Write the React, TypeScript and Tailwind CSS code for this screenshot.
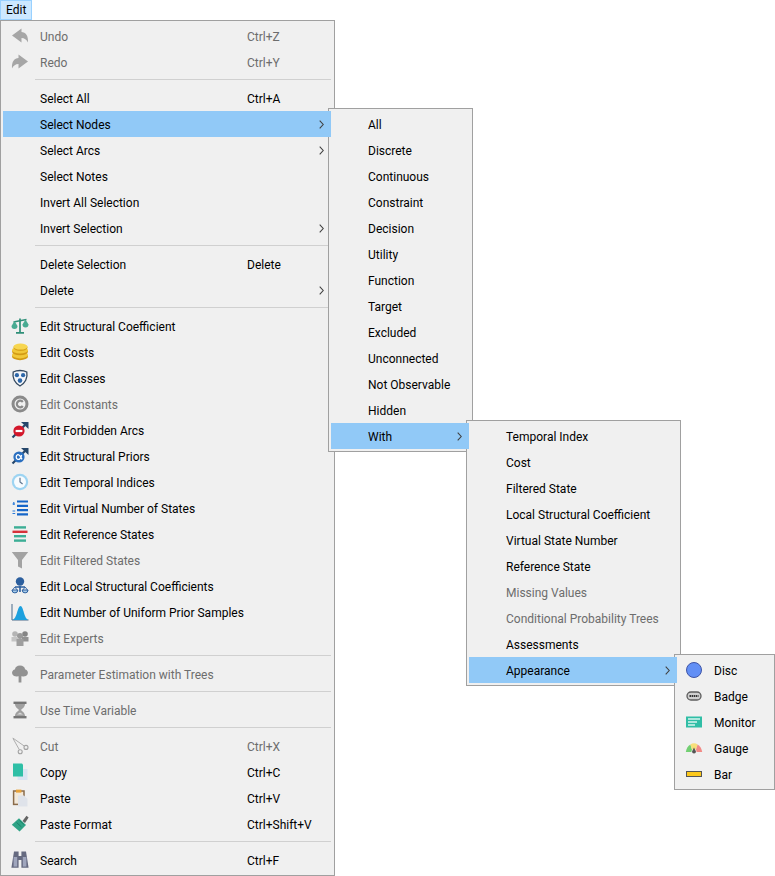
import React from "react";

type Ic = React.ReactNode;
const S = ({ children }: { children: Ic }) => (
  <svg width="18" height="18" viewBox="0 0 18 18" className="block">{children}</svg>
);

const arrowPath = "M1 8.5 L10.5 1.5 V5 C14.5 5 17.5 8.5 17 15.5 C15.5 12.5 13.5 11 10.5 11 V15.5 Z";
const Undo = (
  <S><path d={arrowPath} fill="#a6a6a6" /></S>
);
const Redo = (
  <S><g transform="translate(18,0) scale(-1,1)"><path d={arrowPath} fill="#a6a6a6" /></g></S>
);
const Scales = (
  <S>
    <path d="M9 1.5 V15 M5 15.8 H13" stroke="#2f8f78" strokeWidth="1.7" fill="none" />
    <path d="M2.5 5 L15.5 2.5" stroke="#2f8f78" strokeWidth="1.3" />
    <path d="M0.5 9 A3 3 0 0 0 6.5 9 L3.5 4 Z" fill="#48ab92" />
    <path d="M11.5 7.5 A3 3 0 0 0 17.5 7.5 L14.5 2.5 Z" fill="#48ab92" />
  </S>
);
const Coins = (
  <S>
    <ellipse cx="9" cy="13.4" rx="8" ry="3.8" fill="#d29a14" />
    <ellipse cx="9" cy="11.8" rx="8" ry="3.6" fill="#f1c838" />
    <ellipse cx="9" cy="8.6" rx="8" ry="3.6" fill="#d29a14" />
    <ellipse cx="9" cy="7.2" rx="8" ry="3.4" fill="#f1c838" />
    <ellipse cx="9.5" cy="4.6" rx="7" ry="3.4" fill="#d8a41a" />
    <ellipse cx="9.5" cy="3.6" rx="7" ry="3" fill="#f7d650" />
  </S>
);
const Classes = (
  <S>
    <path d="M2.2 3 C6 1 12 1 15.8 3 C17 9 14 14.5 9 17 C4 14.5 1 9 2.2 3 Z" fill="#f4f6fa" stroke="#34495f" strokeWidth="1.3" />
    <circle cx="5.9" cy="6.2" r="2.1" fill="#2c66a8" />
    <circle cx="12.1" cy="6.2" r="2.1" fill="#2c66a8" />
    <circle cx="9" cy="11.6" r="2.3" fill="#2c66a8" />
  </S>
);
const Constants = (
  <S>
    <circle cx="9" cy="9" r="7" fill="none" stroke="#8a8a8a" strokeWidth="3" />
    <path d="M11.8 7 A3.3 3.3 0 1 0 11.8 11" fill="none" stroke="#8a8a8a" strokeWidth="2.2" />
  </S>
);
const Forbidden = (
  <S>
    <path d="M1.5 16.5 L14 4" stroke="#25466a" strokeWidth="2.2" />
    <path d="M10 1 H17.5 V8 Z" fill="#25466a" />
    <circle cx="8" cy="10" r="5.6" fill="#d3172b" />
    <rect x="4.6" y="8.9" width="6.8" height="2.2" fill="#fff" />
  </S>
);
const Priors = (
  <S>
    <path d="M1.5 16.5 L14 4" stroke="#25466a" strokeWidth="2.2" />
    <path d="M10 1 H17.5 V8 Z" fill="#25466a" />
    <circle cx="8" cy="10" r="5.6" fill="#2a6fc0" />
    <path d="M10.6 8 C9.6 13 7.6 12.6 6.4 12.2 C4.8 11.6 4.8 8.4 6.4 7.8 C8 7.2 9.6 9.6 11 12.4" fill="none" stroke="#fff" strokeWidth="1.3" />
  </S>
);
const Clock = (
  <S>
    <circle cx="9" cy="9" r="8.2" fill="#9dd4f2" />
    <circle cx="9" cy="9" r="6" fill="#f7fbfe" />
    <path d="M9 4.8 V9 L11.6 11" fill="none" stroke="#5f7690" strokeWidth="1.2" />
  </S>
);
const VirtualList = (
  <S>
    <path d="M6 2.5 H17 M6 6.8 H17 M6 11.1 H17 M6 15.4 H17" stroke="#1565c8" strokeWidth="2.2" />
    <path d="M1.5 5 H4 M2.8 3 V6 M1.5 12 H4.2 M1.5 14.5 H4.2" stroke="#2b7bd8" strokeWidth="1.2" />
  </S>
);
const Reference = (
  <S>
    <rect x="3" y="1.2" width="12" height="2.4" fill="#3cae96" />
    <rect x="1.5" y="5.6" width="15" height="2.4" fill="#d6323a" />
    <rect x="3" y="10" width="12" height="2.4" fill="#3cae96" />
    <rect x="3" y="14.4" width="12" height="2.4" fill="#3cae96" />
  </S>
);
const Filter = (
  <S><path d="M0.8 1 H17.2 L11 9 V17.5 L7 15.5 V9 Z" fill="#a3a3a3" /></S>
);
const Local = (
  <S>
    <circle cx="9" cy="4.5" r="4.2" fill="#2c5f9e" />
    <path d="M9 9 V15 M4 10 H14" stroke="#2c5f9e" strokeWidth="1.6" />
    <path d="M3.8 10 L1.2 13.5 M3.8 10 L6.6 13.5 M14.2 10 L11.4 13.5 M14.2 10 L16.8 13.5" stroke="#2c5f9e" strokeWidth="0.9" />
    <path d="M1 13 A2.9 2.9 0 0 0 6.8 13 Z M11.2 13 A2.9 2.9 0 0 0 17 13 Z" fill="#a9cdea" stroke="#2c5f9e" strokeWidth="1" />
  </S>
);
const Normal = (
  <S>
    <path d="M1 1 V17 H17.5" fill="none" stroke="#4a6a8a" strokeWidth="1" />
    <path d="M1.5 17 C6 16 6.5 3 9.5 3 C12.5 3 13 16 17.5 17 Z" fill="#1ca0de" />
  </S>
);
const Experts = (
  <S>
    <circle cx="4" cy="5" r="2.8" fill="#b4b4b4" />
    <circle cx="14" cy="5" r="2.8" fill="#858585" />
    <circle cx="9" cy="7" r="3" fill="#9a9a9a" />
    <path d="M0.5 8 H7 V12.5 H0.5 Z" fill="#c4c4c4" />
    <path d="M11 8 H17.5 V12.5 H11 Z" fill="#929292" />
    <path d="M5.5 10 H12.5 V17 H5.5 Z" fill="#9e9e9e" />
  </S>
);
const Tree = (
  <S>
    <path d="M9 0.6 C12 0.6 14 2.4 14 4.2 C16.4 5 17.6 7 16.6 9.2 C15.6 11.2 13 11.8 11 11.2 L10.4 11.2 V17.4 H7.6 V11.2 L7 11.2 C5 11.8 2.4 11.2 1.4 9.2 C0.4 7 1.6 5 4 4.2 C4 2.4 6 0.6 9 0.6 Z" fill="#929292" />
  </S>
);
const Hourglass = (
  <S>
    <rect x="2.5" y="0.6" width="13" height="2.4" fill="#767676" />
    <rect x="2.5" y="15" width="13" height="2.4" fill="#767676" />
    <path d="M4 3 H14 C14 6.5 10.5 8 10 9 C10.5 10 14 11.5 14 15 H4 C4 11.5 7.5 10 8 9 C7.5 8 4 6.5 4 3 Z" fill="#a0a0a0" />
    <path d="M6 13.6 L9 11.4 L12 13.6 Z" fill="#d8d8d8" />
  </S>
);
const Scissors = (
  <S>
    <path d="M1.8 1 L13.2 9 M2 1.5 L8.4 12.8" stroke="#aeaeae" strokeWidth="1" fill="none" />
    <circle cx="15" cy="10.4" r="2" fill="none" stroke="#a3a3a3" strokeWidth="1.1" />
    <circle cx="9.2" cy="14.8" r="2" fill="none" stroke="#a3a3a3" strokeWidth="1.1" />
  </S>
);
const Copy = (
  <S>
    <rect x="6.5" y="6" width="10" height="11" fill="#d9e4f2" />
    <path d="M2 0.5 H11 L12 1.5 V13.5 H2 Z" fill="#2fbfa6" />
  </S>
);
const Paste = (
  <S>
    <rect x="2.6" y="2" width="10.4" height="13.4" fill="#f3e9da" stroke="#8a6b4a" strokeWidth="1.5" />
    <rect x="5" y="0.6" width="5.4" height="3" fill="#e8a33a" />
    <path d="M7 6.5 H13 L16.5 10 V17.5 H7 Z" fill="#dfe3ea" />
  </S>
);
const PasteFormat = (
  <S>
    <path d="M11.5 6 L15.5 0.8 L17.6 2.4 L14 8 Z" fill="#636363" />
    <path d="M8 3.2 L15 10 L8.6 16.6 L0.8 9.8 Z" fill="#2fa386" />
    <path d="M8.5 5.5 L13 9.5 M5.5 7.5 L10.5 12" stroke="#1e7f69" strokeWidth="0.9" />
  </S>
);
const Search = (
  <S>
    <path d="M3 0.6 H7.6 V5 H10.4 V0.6 H15 L17.6 16.8 H10.4 V9 H7.6 V16.8 H0.4 Z" fill="#666a80" />
    <rect x="2.6" y="6" width="3.6" height="9.6" fill="#a0a6bd" />
    <rect x="11.8" y="6" width="3.6" height="9.6" fill="#a0a6bd" />
  </S>
);
const Disc = (
  <S><circle cx="9" cy="9" r="7.5" fill="#628ff5" stroke="#3f55a8" strokeWidth="1" /></S>
);
const Badge = (
  <S>
    <rect x="2" y="5" width="14" height="8" rx="4" fill="#cfcfcf" stroke="#5c5c5c" strokeWidth="1.3" />
    <path d="M4.5 9 H13.5" stroke="#333" strokeWidth="2.2" strokeDasharray="1.5 0.6" />
  </S>
);
const Monitor = (
  <S>
    <rect x="1" y="3.5" width="16" height="11" fill="#30bea6" />
    <path d="M3 6 H15 M3 9 H12 M3 12 H10" stroke="#d8f5ef" strokeWidth="1.4" />
  </S>
);
const Gauge = (
  <S>
    <path d="M0.8 13 C1.2 9.5 3 7 5.4 5.4 L7 10.5 L6.4 13 Z" fill="#72cf72" />
    <path d="M5.4 5.4 C7.6 3.8 10.4 3.8 12.6 5.4 L11 10.5 H7 Z" fill="#f7e07a" />
    <path d="M12.6 5.4 C15 7 16.8 9.5 17.2 13 H11.6 L11 10.5 Z" fill="#f28a86" />
    <path d="M9 8.5 L11 12.5 A2 2 0 0 1 7 12.5 Z" fill="#555" />
  </S>
);
const Bar = (
  <S><rect x="1.5" y="6.5" width="15" height="5" fill="#fcc81c" stroke="#555" strokeWidth="1" /></S>
);

type Row =
  | "sep"
  | {
      t: string;
      i?: Ic;
      k?: string;
      off?: boolean;
      arrow?: boolean;
      hot?: boolean;
      sub?: { w: string; rows: Row[] };
    };

const appearance: Row[] = [
  { t: "Disc", i: Disc },
  { t: "Badge", i: Badge },
  { t: "Monitor", i: Monitor },
  { t: "Gauge", i: Gauge },
  { t: "Bar", i: Bar },
];

const withRows: Row[] = [
  { t: "Temporal Index" },
  { t: "Cost" },
  { t: "Filtered State" },
  { t: "Local Structural Coefficient" },
  { t: "Virtual State Number" },
  { t: "Reference State" },
  { t: "Missing Values", off: true },
  { t: "Conditional Probability Trees", off: true },
  { t: "Assessments" },
  { t: "Appearance", arrow: true, hot: true, sub: { w: "w-[101px]", rows: appearance } },
];

const nodes: Row[] = [
  { t: "All" },
  { t: "Discrete" },
  { t: "Continuous" },
  { t: "Constraint" },
  { t: "Decision" },
  { t: "Utility" },
  { t: "Function" },
  { t: "Target" },
  { t: "Excluded" },
  { t: "Unconnected" },
  { t: "Not Observable" },
  { t: "Hidden" },
  { t: "With", arrow: true, hot: true, sub: { w: "w-[215px]", rows: withRows } },
];

const main: Row[] = [
  { t: "Undo", i: Undo, k: "Ctrl+Z", off: true },
  { t: "Redo", i: Redo, k: "Ctrl+Y", off: true },
  "sep",
  { t: "Select All", k: "Ctrl+A" },
  { t: "Select Nodes", arrow: true, hot: true, sub: { w: "w-[145px]", rows: nodes } },
  { t: "Select Arcs", arrow: true },
  { t: "Select Notes" },
  { t: "Invert All Selection" },
  { t: "Invert Selection", arrow: true },
  "sep",
  { t: "Delete Selection", k: "Delete" },
  { t: "Delete", arrow: true },
  "sep",
  { t: "Edit Structural Coefficient", i: Scales },
  { t: "Edit Costs", i: Coins },
  { t: "Edit Classes", i: Classes },
  { t: "Edit Constants", i: Constants, off: true },
  { t: "Edit Forbidden Arcs", i: Forbidden },
  { t: "Edit Structural Priors", i: Priors },
  { t: "Edit Temporal Indices", i: Clock },
  { t: "Edit Virtual Number of States", i: VirtualList },
  { t: "Edit Reference States", i: Reference },
  { t: "Edit Filtered States", i: Filter, off: true },
  { t: "Edit Local Structural Coefficients", i: Local },
  { t: "Edit Number of Uniform Prior Samples", i: Normal },
  { t: "Edit Experts", i: Experts, off: true },
  "sep",
  { t: "Parameter Estimation with Trees", i: Tree, off: true },
  "sep",
  { t: "Use Time Variable", i: Hourglass, off: true },
  "sep",
  { t: "Cut", i: Scissors, k: "Ctrl+X", off: true },
  { t: "Copy", i: Copy, k: "Ctrl+C" },
  { t: "Paste", i: Paste, k: "Ctrl+V" },
  { t: "Paste Format", i: PasteFormat, k: "Ctrl+Shift+V" },
  "sep",
  { t: "Search", i: Search, k: "Ctrl+F" },
];

function Menu({ rows, w, nested }: { rows: Row[]; w: string; nested?: boolean }) {
  return (
    <div
      className={`${w} ${
        nested ? "absolute left-[calc(100%-3px)] top-[-3px] z-10" : "relative"
      } border border-[#a0a0a0] bg-[#f0f0f0] pt-[2px] pb-[2px] pl-[2px] pr-[3px]`}
    >
      {rows.map((r, n) =>
        r === "sep" ? (
          <div key={n} className="h-[10px] pl-[32px] pt-[4px]">
            <div className="h-px bg-[#d0d0d0]" />
          </div>
        ) : (
          <div key={n} className="relative h-[26px]">
            <div
              className={`relative z-20 flex h-full items-center ${r.hot ? "bg-[#91c9f7]" : ""} ${
                r.off ? "text-[#6d6d6d]" : "text-black"
              }`}
            >
              <div className="flex w-[37px] shrink-0 pl-[8px]">{r.i}</div>
              <div className="w-[207px] shrink-0 whitespace-nowrap pt-[2px]">{r.t}</div>
              {r.k && <div className="whitespace-nowrap pt-[2px]">{r.k}</div>}
              {r.arrow && (
                <svg width="5" height="9" viewBox="0 0 5 9" className="absolute right-[7px] top-[9px]">
                  <path d="M0.7 0.7 L4.2 4.5 L0.7 8.3" fill="none" stroke="#404040" strokeWidth="1.1" />
                </svg>
              )}
            </div>
            {r.sub && <Menu rows={r.sub.rows} w={r.sub.w} nested />}
          </div>
        )
      )}
    </div>
  );
}

export default function App() {
  return (
    <div className="h-[876px] w-[775px] overflow-hidden bg-white font-['Roboto','Noto_Sans',sans-serif] text-[12px] leading-[16px]">
      <div className="flex h-[20px] items-start">
        <div className="flex h-[20px] items-center border border-[#99d1ff] bg-[#cce8ff] px-[5px] text-black">Edit</div>
      </div>
      <Menu rows={main} w="w-[335px]" />
    </div>
  );
}
